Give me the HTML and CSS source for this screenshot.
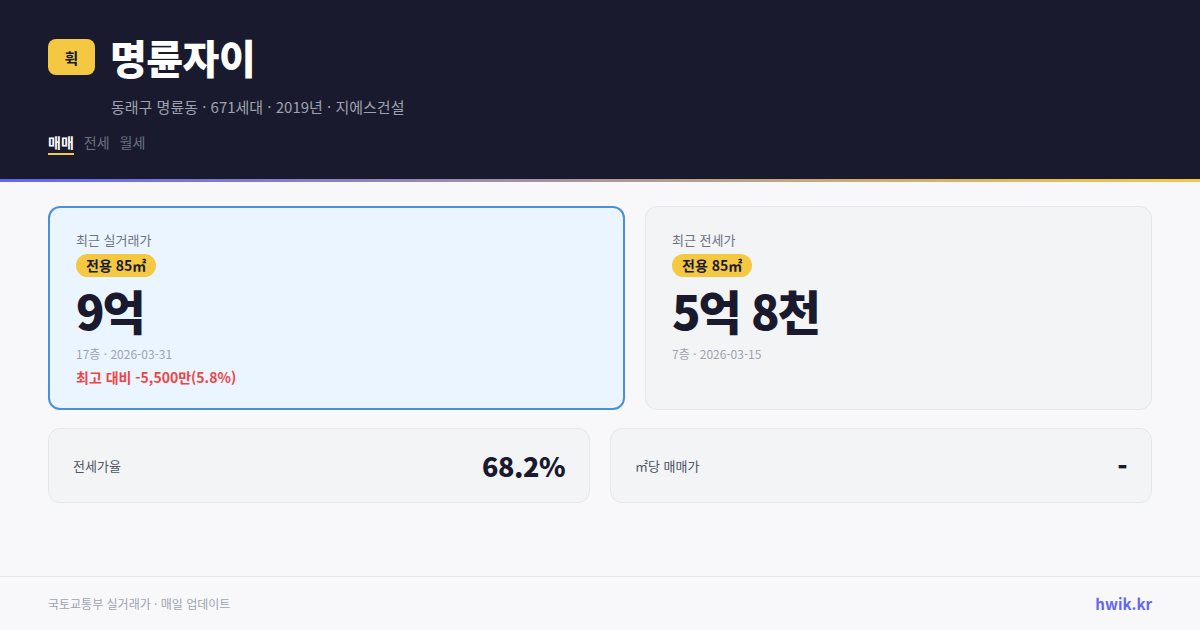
FILE: index.html
```html
<!DOCTYPE html>
<html lang="ko">
<head>
<meta charset="utf-8">
<link rel="stylesheet" href="styles.css">
</head>
<body>
<div class="page">
  <header class="header">
    <div class="title-row">
      <div class="logo">휙</div>
      <h1 class="title">명륜자이</h1>
    </div>
    <div class="subtitle">동래구 명륜동 · 671세대 · 2019년 · 지에스건설</div>
    <nav class="tabs">
      <span class="tab active">매매</span>
      <span class="tab">전세</span>
      <span class="tab">월세</span>
    </nav>
  </header>
  <div class="accent"></div>
  <main class="main">
    <div class="cards">
      <section class="card card-primary">
        <div class="card-label">최근 실거래가</div>
        <div class="badge">전용 85㎡</div>
        <div class="price">9억</div>
        <div class="meta">17층 · 2026-03-31</div>
        <div class="diff">최고 대비 -5,500만(5.8%)</div>
      </section>
      <section class="card">
        <div class="card-label">최근 전세가</div>
        <div class="badge">전용 85㎡</div>
        <div class="price">5억 8천</div>
        <div class="meta">7층 · 2026-03-15</div>
      </section>
    </div>
    <div class="stats">
      <div class="stat">
        <span class="stat-label">전세가율</span>
        <span class="stat-value">68.2%</span>
      </div>
      <div class="stat">
        <span class="stat-label">㎡당 매매가</span>
        <span class="stat-value">-</span>
      </div>
    </div>
  </main>
  <footer class="footer">
    <span class="source">국토교통부 실거래가 · 매일 업데이트</span>
    <span class="brand">hwik.kr</span>
  </footer>
</div>
</body>
</html>
```

FILE: styles.css
```css
* { box-sizing: border-box; margin: 0; padding: 0; }
html, body {
  width: 1200px;
  height: 630px;
  overflow: hidden;
}
body {
  font-family: "Noto Sans CJK KR", "Noto Sans", sans-serif;
  background: #f8f8fa;
  color: #1a1a2e;
}
.page {
  height: 630px;
  display: flex;
  flex-direction: column;
}
.header {
  background: #1a1a2e;
  padding: 33px 48px 24px;
}
.title-row {
  display: flex;
  align-items: center;
  gap: 15px;
  height: 48px;
}
.logo {
  width: 47px;
  height: 36px;
  border-radius: 8px;
  background: #f5c842;
  color: #1a1a2e;
  font-weight: 700;
  font-size: 15px;
  display: flex;
  align-items: center;
  justify-content: center;
}
.title {
  color: #ffffff;
  font-size: 40px;
  font-weight: 900;
  line-height: 48px;
  letter-spacing: -0.5px;
}
.subtitle {
  margin-top: 16px;
  margin-left: 63px;
  font-size: 15px;
  line-height: 20px;
  color: #9ca3af;
}
.tabs {
  margin-top: 15px;
  display: flex;
  gap: 10px;
}
.tab {
  font-size: 14px;
  line-height: 20px;
  color: #6b7280;
  padding-bottom: 1px;
  border-bottom: 2px solid transparent;
}
.tab.active {
  color: #ffffff;
  font-weight: 700;
  border-bottom-color: #f5c842;
}
.accent {
  height: 3px;
  background: linear-gradient(90deg, #6366f1, #f5c842);
}
.main {
  flex: 1;
  padding: 24px 48px 0;
}
.cards {
  display: grid;
  grid-template-columns: 577fr 507fr;
  gap: 20px;
}
.card {
  background: #f3f4f6;
  border: 1px solid #e5e7eb;
  border-radius: 12px;
  padding: 24px 26px 22px;
}
.card-primary {
  background: #ebf5ff;
  border: 2px solid #4a90d9;
  padding: 23px 26px 21px;
}
.card-label {
  font-size: 13px;
  line-height: 18px;
  color: #6b7280;
}
.badge {
  display: inline-block;
  margin-top: 5px;
  background: #f5c842;
  color: #1a1a2e;
  font-size: 14px;
  font-weight: 700;
  line-height: 23px;
  padding: 0 10px;
  border-radius: 12px;
}
.price {
  font-size: 47px;
  font-weight: 800;
  line-height: 66px;
  letter-spacing: -2px;
  color: #1a1a2e;
}
.meta {
  margin-top: 2px;
  font-size: 12px;
  line-height: 18px;
  color: #9ca3af;
}
.diff {
  margin-top: 4px;
  font-size: 14px;
  font-weight: 700;
  line-height: 20px;
  color: #ef4444;
}
.stats {
  margin-top: 18px;
  display: grid;
  grid-template-columns: 1fr 1fr;
  gap: 20px;
}
.stat {
  height: 75px;
  background: #f3f4f6;
  border: 1px solid #e5e7eb;
  border-radius: 12px;
  padding: 0 24px;
  display: flex;
  align-items: center;
  justify-content: space-between;
}
.stat-label {
  font-size: 13px;
  color: #4b5563;
}
.stat-value {
  font-size: 27px;
  font-weight: 800;
  letter-spacing: -0.5px;
  color: #1a1a2e;
}
.footer {
  height: 54px;
  border-top: 1px solid #e5e7eb;
  padding: 0 48px;
  display: flex;
  align-items: center;
  justify-content: space-between;
}
.source {
  font-size: 12px;
  color: #9ca3af;
}
.brand {
  font-size: 15px;
  font-weight: 700;
  color: #6366f1;
}
```
